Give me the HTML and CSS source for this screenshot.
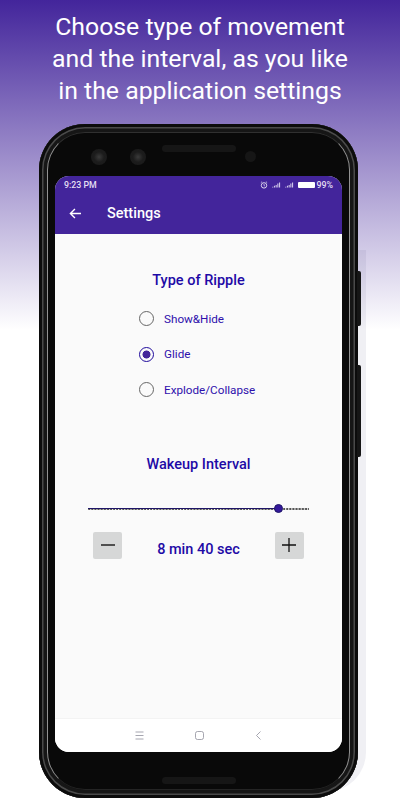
FILE: index.html
```html
<!DOCTYPE html>
<html lang="en">
<head>
<meta charset="utf-8">
<title>Settings</title>
<link rel="stylesheet" href="styles.css">
</head>
<body>
<main class="page">
  <h1 class="headline">Choose type of movement<br>and the interval, as you like<br>in the application settings</h1>
  <div class="phone">
    <span class="phone-shadow"></span>
    <span class="side-btn side-btn-a"></span>
    <span class="side-btn side-btn-b"></span>
    <div class="bezel-top">
      <span class="lens lens-a"></span>
      <span class="lens lens-b"></span>
      <span class="sensor"></span>
      <span class="speaker speaker-top"></span>
    </div>
    <div class="screen">
      <header class="appbar">
        <div class="status">
          <span>9:23 PM</span>
          <div class="status-right">
            <svg class="st-alarm" viewBox="0 0 10 10" width="8" height="8"><circle cx="5" cy="5.5" r="3.4" fill="none" stroke="#fff" stroke-width="1"/><path d="M1 2.2 2.600.8M9 2.200 7.400.8M5 3.800v1.900l1.200.7" fill="none" stroke="#fff" stroke-width=".8"/></svg>
            <svg class="st-signal" viewBox="0 0 10 7" width="9" height="6"><path d="M0 6.500h1.200v-1H0zM2 6.500h1.200v-2H2zM4 6.500h1.200V3.500H4zM6 6.500h1.200V1.800H6zM8 6.500h1.200V.5H8z" fill="#d9d2ee"/></svg>
            <svg class="st-signal" viewBox="0 0 10 7" width="9" height="6"><path d="M0 6.500h1.200v-1H0zM2 6.500h1.200v-2H2zM4 6.500h1.200V3.500H4zM6 6.500h1.200V1.800H6zM8 6.500h1.200V.5H8z" fill="#d9d2ee"/></svg>
            <span class="battery"></span>
            <span>99%</span>
          </div>
        </div>
        <div class="toolbar">
          <svg class="back" viewBox="0 0 14 12" width="13" height="11"><path d="M13 6H1.600M6.400 1 1.400 6l5 5" fill="none" stroke="#fff" stroke-width="1.500"/></svg>
          <span class="toolbar-title">Settings</span>
        </div>
      </header>
      <section class="content">
        <h2 class="section-title">Type of Ripple</h2>
        <ul class="radio-list">
          <li class="radio-row"><span class="radio"></span>Show&amp;Hide</li>
          <li class="radio-row"><span class="radio radio-on"></span>Glide</li>
          <li class="radio-row"><span class="radio"></span>Explode/Collapse</li>
        </ul>
        <h2 class="section-title section-title-b">Wakeup Interval</h2>
        <div class="slider">
          <span class="slider-fill"></span>
          <span class="slider-thumb"></span>
        </div>
        <div class="stepper">
          <span class="step-btn"><svg viewBox="0 0 14 14" width="14" height="14"><path d="M0 7h14" stroke="#222" stroke-width="1.300"/></svg></span>
          <span class="step-value">8 min 40 sec</span>
          <span class="step-btn"><svg viewBox="0 0 14 14" width="14" height="14"><path d="M0 7h14M7 0v14" stroke="#111" stroke-width="1.300"/></svg></span>
        </div>
      </section>
      <nav class="navbar">
        <svg viewBox="0 0 9 9" width="9" height="9"><path d="M.5 1h8M.5 4.500h8M.5 8h8" stroke="#8f8f9c" stroke-width=".8"/></svg>
        <svg viewBox="0 0 9 9" width="9" height="9"><rect x=".5" y=".5" width="8" height="8" rx="2" fill="none" stroke="#8f8f9c" stroke-width=".8"/></svg>
        <svg viewBox="0 0 9 9" width="9" height="9"><path d="M6.500.5 2.500 4.500l4 4" fill="none" stroke="#8f8f9c" stroke-width=".8"/></svg>
      </nav>
    </div>
    <div class="bezel-bottom"><span class="speaker"></span></div>
  </div>
</main>
</body>
</html>
```
FILE: styles.css
```css
* { box-sizing: border-box; }
html, body { margin: 0; padding: 0; }
body {
  width: 400px;
  height: 800px;
  overflow: hidden;
  font-family: Roboto, "Liberation Sans", sans-serif;
}
.page {
  position: relative;
  z-index: 0;
  width: 400px;
  height: 800px;
  padding-top: 11px;
  overflow: hidden;
  background: linear-gradient(180deg, #43259b 0, #ffffff 330px);
}
.headline {
  margin: 0;
  height: 113px;
  color: #fff;
  font-size: 24.8px;
  font-weight: 400;
  line-height: 32px;
  text-align: center;
}
.phone {
  position: relative;
  width: 319px;
  height: 674px;
  margin-left: 39px;
  padding: 0 16px;
  background: #090909;
  border-radius: 46px;
  box-shadow:
    inset 0 0 0 3px #0c0c0c,
    inset 0 0 0 4.500px #4a4a4a,
    inset 0 0 0 8px #161616;
}
.phone::before {
  content: "";
  position: absolute;
  inset: 8px;
  border: 1.500px solid;
  border-color: #303030 #929292 #242424 #929292;
  border-radius: 38px;
  pointer-events: none;
}
.phone-shadow {
  position: absolute;
  z-index: -1;
  top: 126px;
  right: -8px;
  width: 60px;
  height: 542px;
  background: rgba(50, 50, 110, .075);
  border-radius: 0 0 40px 0;
}
.side-btn {
  position: absolute;
  left: 318px;
  width: 4px;
  background: #161616;
  border-radius: 0 2px 2px 0;
}
.side-btn-a { top: 147px; height: 55px; }
.side-btn-b { top: 241px; height: 92px; }
.bezel-top {
  position: relative;
  height: 52px;
}
.lens, .sensor {
  position: absolute;
  border-radius: 50%;
}
.lens {
  top: 25px;
  width: 16px;
  height: 16px;
  background: radial-gradient(circle, #3a3a3a 0, #1c1c1c 45%, #191919 100%);
}
.lens-a { left: 36px; }
.lens-b { left: 75px; }
.sensor {
  top: 27px;
  left: 190px;
  width: 11px;
  height: 11px;
  background: #161616;
}
.speaker {
  display: block;
  width: 74px;
  height: 7px;
  border-radius: 4px;
  background: #161616;
}
.speaker-top {
  position: absolute;
  top: 21px;
  left: 107px;
}
.screen {
  display: flex;
  flex-direction: column;
  width: 287px;
  height: 576px;
  overflow: hidden;
  border-radius: 14px;
  background: #fff;
}
.appbar {
  height: 58px;
  color: #fff;
  background: #43259b;
  box-shadow: 0 1px 2px rgba(0, 0, 0, .15);
}
.status {
  display: flex;
  align-items: center;
  justify-content: space-between;
  height: 17px;
  padding: 0 9px;
  color: #e4dff3;
  font-size: 8.800px;
  font-weight: 500;
}
.status-right {
  display: flex;
  align-items: center;
  gap: 4px;
}
.battery {
  width: 17px;
  height: 6px;
  margin-right: -2px;
  border-radius: 1px;
  background: #fff;
}
.toolbar {
  display: flex;
  align-items: center;
  height: 41px;
  padding-left: 14px;
}
.back { flex: none; }
.toolbar-title {
  margin-left: 25px;
  font-size: 14.500px;
  font-weight: 500;
}
.content {
  flex: 1;
  padding-top: 38px;
  background: #fafafa;
}
.section-title {
  margin: 0;
  color: #1e0aa6;
  font-size: 14.500px;
  font-weight: 500;
  line-height: 17px;
  text-align: center;
}
.section-title-b { margin-top: 48px; }
.radio-list {
  margin: 12px 0 0;
  padding: 0 0 0 84px;
  list-style: none;
}
.radio-row {
  display: flex;
  align-items: center;
  height: 35.500px;
  gap: 10px;
  color: #2e10ac;
  font-size: 11.700px;
}
.radio {
  width: 15px;
  height: 15px;
  border: 1.500px solid #666;
  border-radius: 50%;
}
.radio-on {
  border-color: #1f0a9c;
  background: radial-gradient(circle, #43259b 0, #43259b 3.700px, transparent 4.300px);
}
.slider {
  position: relative;
  width: 221px;
  height: 6px;
  margin: 33px 0 0 33px;
  background: radial-gradient(circle at 1.200px 50%, #555 0, #555 .9px, transparent 1.100px) 0 0 / 3.100px 6px repeat-x;
}
.slider-fill {
  position: absolute;
  top: 2px;
  left: 0;
  width: 190px;
  height: 1.500px;
  background: #1f1568;
}
.slider-thumb {
  position: absolute;
  top: -1.500px;
  left: 186px;
  width: 9px;
  height: 9px;
  border: 1px solid #1f1568;
  border-radius: 50%;
  background: #33189a;
}
.stepper {
  display: flex;
  align-items: flex-start;
  justify-content: space-between;
  margin: 20px 38px 0;
}
.step-btn {
  display: flex;
  align-items: center;
  justify-content: center;
  width: 29px;
  height: 27px;
  border-radius: 2px;
  background: #d6d7d7;
}
.step-value {
  margin-top: 9px;
  color: #1e0aa6;
  font-size: 14.500px;
  font-weight: 500;
  line-height: 17px;
}
.navbar {
  display: flex;
  align-items: center;
  justify-content: space-between;
  height: 34px;
  padding: 0 79px 0 80px;
  background: #fff;
  border-top: 1px solid #f3f3f3;
}
.bezel-bottom {
  display: flex;
  justify-content: center;
  padding-top: 25px;
}
```
